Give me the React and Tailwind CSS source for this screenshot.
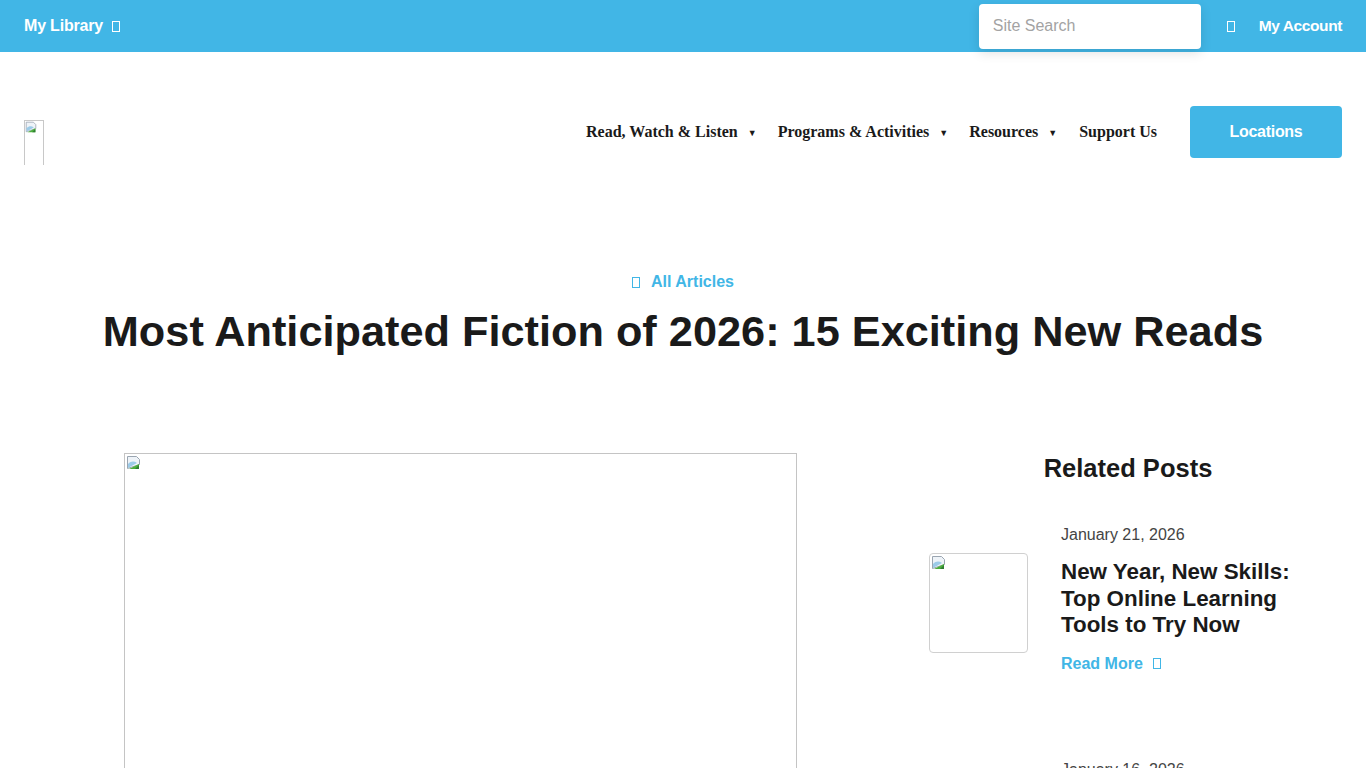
import React from "react";

const Tofu = ({ className = "" }) => (
  <span className={`inline-block w-[8px] h-[11px] border border-current align-middle ${className}`} />
);

const Broken = () => (
  <svg width="16" height="16" viewBox="0 0 16 16" className="block">
    <path d="M1.5 1.5h9l3 3v5l-12 4z" fill="#eef3f8" stroke="#9aa5b1" strokeWidth="1" />
    <path d="M2 9c3-3 6-3 9-1l-9 5z" fill="#9ccbe8" />
    <path d="M3 14l10-5v5z" fill="#4caf3c" />
    <path d="M13 10v4h-4z" fill="#2e7d32" />
  </svg>
);

const Caret = () => <span className="ml-[10px] text-[9px] align-middle">▼</span>;

export default function App() {
  return (
    <div className="min-h-[768px] h-[768px] bg-white font-['Liberation_Sans',Arial,sans-serif] overflow-hidden">
      {/* Top bar */}
      <div className="h-[52px] bg-[#41b6e6] flex items-center justify-between px-[24px]">
        <div className="flex items-center text-white font-bold text-[16px] tracking-[-0.2px]">
          My Library <Tofu className="ml-[9px]" />
        </div>
        <div className="flex items-center h-full">
          <div className="w-[222px] h-[45px] bg-white rounded-[4px] shadow-[0_4px_12px_rgba(0,0,0,0.12)] flex items-center px-[14px] text-[16px] text-[#a3a3a3]">
            Site Search
          </div>
          <Tofu className="ml-[26px] text-white" />
          <span className="ml-[24px] text-white text-[15.5px] font-bold tracking-[-0.4px]">My Account</span>
        </div>
      </div>

      {/* Header */}
      <div className="h-[160px] flex items-center justify-between px-[24px]">
        <div className="w-[20px] h-[45px] border border-[#c8c8c8] border-b-0 mt-[21px]">
          <div className="scale-[0.8] origin-top-left"><Broken /></div>
        </div>
        <div className="flex items-center">
          <nav className="flex items-center font-['Liberation_Serif','Times_New_Roman',serif] font-bold text-[16px] text-[#1a1a1a]">
            <span>Read, Watch &amp; Listen<Caret /></span>
            <span className="ml-[21px]">Programs &amp; Activities<Caret /></span>
            <span className="ml-[21px]">Resources<Caret /></span>
            <span className="ml-[22px]">Support Us</span>
          </nav>
          <div className="ml-[33px] w-[152px] h-[52px] bg-[#41b6e6] rounded-[4px] flex items-center justify-center text-white font-bold text-[16px] tracking-[-0.3px]">
            Locations
          </div>
        </div>
      </div>

      {/* Title block */}
      <div className="flex flex-col items-center pt-[59px]">
        <div className="flex items-center text-[#41b6e6] font-bold text-[16px] leading-[22px]">
          <Tofu className="mr-[11px]" />All Articles
        </div>
        <h1 className="mt-[12px] text-[43.3px] leading-[52px] font-bold text-[#1a1a1a] whitespace-nowrap">
          Most Anticipated Fiction of 2026: 15 Exciting New Reads
        </h1>
      </div>

      {/* Content */}
      <div className="flex mt-[96px] pl-[124px]">
        <div className="w-[673px] h-[400px] border border-[#c4c4c4] border-b-0 pt-[1px] pl-[1px]">
          <Broken />
        </div>
        <aside className="ml-[117px] w-[428px] flex flex-col">
          <h2 className="text-center text-[25.5px] font-bold text-[#1a1a1a] leading-[30px]">Related Posts</h2>
          <div className="flex items-start mt-[41px] pl-[15px]">
            <div className="mt-[29px] w-[99px] h-[100px] border border-[#d0d0d0] rounded-[4px] shrink-0">
              <div className="pl-[1px] pt-[1px]"><Broken /></div>
            </div>
            <div className="ml-[33px] flex flex-col">
              <div className="text-[16px] text-[#444] leading-[22px]">January 21, 2026</div>
              <div className="mt-[13px] text-[22.4px] font-bold text-[#1a1a1a] leading-[26.5px]">
                New Year, New Skills:<br />Top Online Learning<br />Tools to Try Now
              </div>
              <div className="mt-[14px] flex items-center text-[#41b6e6] font-bold text-[16px] leading-[22px]">
                Read More<Tofu className="ml-[10px]" />
              </div>
            </div>
          </div>
          <div className="mt-[84px] pl-[147px] text-[16px] text-[#444] leading-[22px]">January 16, 2026</div>
        </aside>
      </div>
    </div>
  );
}
